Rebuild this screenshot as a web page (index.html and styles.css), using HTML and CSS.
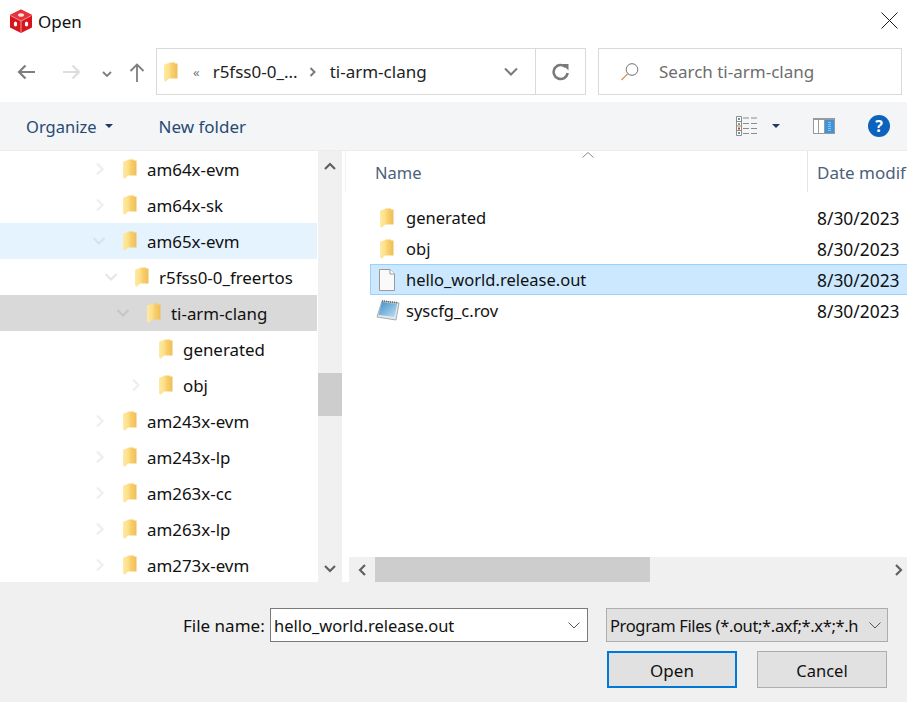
FILE: index.html
```html
<!DOCTYPE html>
<html lang="en">
<head>
<meta charset="utf-8">
<title>Open</title>
<link rel="stylesheet" href="styles.css">
</head>
<body>
<svg class="defs" width="0" height="0" aria-hidden="true">
  <defs>
    <linearGradient id="fg" x1="0" y1="0" x2="1" y2="0">
      <stop offset="0" stop-color="#fdeba6"/><stop offset="1" stop-color="#fcdc82"/>
    </linearGradient>
    <linearGradient id="fb" x1="0" y1="0" x2="1" y2="0">
      <stop offset="0" stop-color="#fbd877"/><stop offset="1" stop-color="#efbd58"/>
    </linearGradient>
    <linearGradient id="nb" x1="0" y1="0" x2="1" y2="1">
      <stop offset="0" stop-color="#3f8fc8"/><stop offset="1" stop-color="#bfe0f2"/>
    </linearGradient>
    <symbol id="folder" viewBox="0 0 16 22">
      <path d="M6.500 1.500H12V2.500H14.500V17.500H6.500Z" fill="url(#fb)"/>
      <path d="M1 3.800 7.300 1.400V16.600L2.600 20.700 1 19.500Z" fill="url(#fg)"/>
    </symbol>
  </defs>
</svg>
<div class="dialog">
  <header class="titlebar">
    <svg class="appicon" width="24" height="24" viewBox="0 0 24 24">
      <path d="M12 .5 23 6V18.500L12 24 1 18.500V6Z" fill="#d8141c"/>
      <path d="M12 .5 23 6 12 11.500 1 6Z" fill="#e8333a"/>
      <path d="M1.500 6.500 12 12V23.500M22.500 6.500 12 12" fill="none" stroke="#f7b8ba" stroke-width=".8"/>
      <ellipse cx="12" cy="6" rx="3" ry="1.800" fill="#fde5e5"/>
      <ellipse cx="6.500" cy="15" rx="1.700" ry="2.600" fill="#fff"/>
      <ellipse cx="17.500" cy="15" rx="1.700" ry="2.600" fill="#fff"/>
    </svg>
    <span class="title">Open</span>
    <svg class="close" width="17" height="17" viewBox="0 0 17 17"><path d="M.5.500 16.500 16.500M16.500.500.500 16.500" stroke="#1a1a1a" fill="none"/></svg>
  </header>

  <nav class="addressrow">
    <svg class="nav back" width="20" height="16" viewBox="0 0 20 16"><path d="M19 8H3M9.500 1.500 3 8l6.500 6.500" fill="none" stroke="#7e7e7e" stroke-width="2.200"/></svg>
    <svg class="nav fwd" width="20" height="16" viewBox="0 0 20 16"><path d="M1 8H17M10.500 1.500 17 8l-6.500 6.500" fill="none" stroke="#dedede" stroke-width="2.200"/></svg>
    <svg class="nav hist" width="10" height="6" viewBox="0 0 10 6"><path d="M1 1l4 4 4-4" fill="none" stroke="#7e7e7e" stroke-width="1.800"/></svg>
    <svg class="nav up" width="16" height="20" viewBox="0 0 16 20"><path d="M8 20V3M1.500 9 8 2.500 14.500 9" fill="none" stroke="#7e7e7e" stroke-width="1.800"/></svg>
    <div class="address">
      <svg class="crumbfolder" width="16" height="22"><use href="#folder"/></svg>
      <span class="chev2">&laquo;</span>
      <span class="crumb">r5fss0-0_...</span>
      <svg class="crumbarrow" width="8" height="10" viewBox="0 0 8 10"><path d="M1.500 1 5.500 5 1.500 9" fill="none" stroke="#7a7a7a" stroke-width="2"/></svg>
      <span class="crumb crumb-last">ti-arm-clang</span>
      <svg class="addrdrop" width="14" height="9" viewBox="0 0 14 9"><path d="M1 1.500 7 7.500 13 1.500" fill="none" stroke="#7a7a7a" stroke-width="2"/></svg>
      <div class="refresh">
        <svg width="18" height="18" viewBox="0 0 18 18"><path d="M13.800 4.200A7 7 0 1 0 15.600 10" fill="none" stroke="#7a7a7a" stroke-width="2.600"/><path d="M10 1h6.500v6.500z" fill="#7a7a7a"/></svg>
      </div>
    </div>
    <div class="search">
      <svg width="20" height="20" viewBox="0 0 20 20"><circle cx="12" cy="7.500" r="5.800" fill="none" stroke="#6e6e6e"/><path d="M7.800 11.700 1.500 18" stroke="#d59a5f" stroke-width="1.400"/></svg>
      <span>Search ti-arm-clang</span>
    </div>
  </nav>

  <div class="toolbar">
    <span class="tool organize">Organize</span>
    <span class="caret"></span>
    <span class="tool newfolder">New folder</span>
    <div class="toolicons">
      <svg class="viewicon" width="22" height="20" viewBox="0 0 22 20">
        <path d="M.5.500h5v19h-5zM.5 5.500h5M.5 10h5M.5 14.500h5" fill="#fff" stroke="#8c8c8c"/>
        <rect x="2" y="2" width="2" height="2" fill="#5b93b8"/><rect x="2" y="7" width="2" height="2" fill="#8aa24f"/><rect x="2" y="11.500" width="2" height="2" fill="#cf3a1c"/><rect x="2" y="16" width="2" height="2" fill="#5b93b8"/>
        <path d="M7 2h6m2 0h6M7 7.500h6m2 0h6M7 12.500h6m2 0h6M7 17.500h6m2 0h6" stroke="#8c8c8c" stroke-width="1.200"/>
      </svg>
      <span class="caret viewcaret"></span>
      <svg class="paneicon" width="22" height="16" viewBox="0 0 22 16">
        <rect width="22" height="16" fill="#9a9a9a"/>
        <rect x="1" y="2" width="4" height="13" fill="#fff"/><rect x="6" y="2" width="5" height="13" fill="#fff"/>
        <rect x="12" y="2" width="9" height="13" fill="#3f93dc"/>
        <path d="M16.500 4v9" stroke="#8cc3ee" stroke-width="3" stroke-dasharray="1 1"/>
      </svg>
      <span class="help">?</span>
    </div>
  </div>

  <main class="panes">
    <section class="treepane">
      <ul class="tree">
        <li class="row d1"><svg class="tw" width="10" height="14" viewBox="0 0 10 14"><path d="M2 1.500 7.500 7 2 12.500"/></svg><svg class="fi" width="16" height="22"><use href="#folder"/></svg><span>am64x-evm</span></li>
        <li class="row d1"><svg class="tw" width="10" height="14" viewBox="0 0 10 14"><path d="M2 1.500 7.500 7 2 12.500"/></svg><svg class="fi" width="16" height="22"><use href="#folder"/></svg><span>am64x-sk</span></li>
        <li class="row d1 hover"><svg class="tw open" width="14" height="10" viewBox="0 0 14 10"><path d="M1.500 2 7 7.500 12.500 2"/></svg><svg class="fi" width="16" height="22"><use href="#folder"/></svg><span>am65x-evm</span></li>
        <li class="row d2"><svg class="tw open" width="14" height="10" viewBox="0 0 14 10"><path d="M1.500 2 7 7.500 12.500 2"/></svg><svg class="fi" width="16" height="22"><use href="#folder"/></svg><span>r5fss0-0_freertos</span></li>
        <li class="row d3 selected"><svg class="tw open" width="14" height="10" viewBox="0 0 14 10"><path d="M1.500 2 7 7.500 12.500 2"/></svg><svg class="fi" width="16" height="22"><use href="#folder"/></svg><span>ti-arm-clang</span></li>
        <li class="row d4"><span class="tw-none"></span><svg class="fi" width="16" height="22"><use href="#folder"/></svg><span>generated</span></li>
        <li class="row d4"><svg class="tw" width="10" height="14" viewBox="0 0 10 14"><path d="M2 1.500 7.500 7 2 12.500"/></svg><svg class="fi" width="16" height="22"><use href="#folder"/></svg><span>obj</span></li>
        <li class="row d1"><svg class="tw" width="10" height="14" viewBox="0 0 10 14"><path d="M2 1.500 7.500 7 2 12.500"/></svg><svg class="fi" width="16" height="22"><use href="#folder"/></svg><span>am243x-evm</span></li>
        <li class="row d1"><svg class="tw" width="10" height="14" viewBox="0 0 10 14"><path d="M2 1.500 7.500 7 2 12.500"/></svg><svg class="fi" width="16" height="22"><use href="#folder"/></svg><span>am243x-lp</span></li>
        <li class="row d1"><svg class="tw" width="10" height="14" viewBox="0 0 10 14"><path d="M2 1.500 7.500 7 2 12.500"/></svg><svg class="fi" width="16" height="22"><use href="#folder"/></svg><span>am263x-cc</span></li>
        <li class="row d1"><svg class="tw" width="10" height="14" viewBox="0 0 10 14"><path d="M2 1.500 7.500 7 2 12.500"/></svg><svg class="fi" width="16" height="22"><use href="#folder"/></svg><span>am263x-lp</span></li>
        <li class="row d1"><svg class="tw" width="10" height="14" viewBox="0 0 10 14"><path d="M2 1.500 7.500 7 2 12.500"/></svg><svg class="fi" width="16" height="22"><use href="#folder"/></svg><span>am273x-evm</span></li>
      </ul>
      <div class="vscroll">
        <svg class="sa" width="12" height="8" viewBox="0 0 12 8"><path d="M1 7 6 2l5 5"/></svg>
        <div class="vtrack"><div class="vthumb"></div></div>
        <svg class="sa" width="12" height="8" viewBox="0 0 12 8"><path d="M1 1l5 5 5-5"/></svg>
      </div>
    </section>
    <section class="filepane">
      <div class="colhead">
        <div class="colname">Name<svg class="sortup" width="12" height="6" viewBox="0 0 12 6"><path d="M.5 5.500 6 .500l5.500 5" fill="none" stroke="#8a8a8a"/></svg></div>
        <div class="coldate">Date modif</div>
      </div>
      <ul class="files">
        <li class="file"><svg class="ficon" width="16" height="22"><use href="#folder"/></svg><span class="fname">generated</span><span class="fdate">8/30/2023</span></li>
        <li class="file"><svg class="ficon" width="16" height="22"><use href="#folder"/></svg><span class="fname">obj</span><span class="fdate">8/30/2023</span></li>
        <li class="file picked"><svg class="ficon" width="16" height="22" viewBox="0 0 16 22"><path d="M.5.500H11L15.500 5V21.500H.5Z" fill="#fafafa" stroke="#9a9a9a"/><path d="M11 .500V5H15.500" fill="#fff" stroke="#9a9a9a"/></svg><span class="fname">hello_world.release.out</span><span class="fdate">8/30/2023</span></li>
        <li class="file"><svg class="ficon wide" width="24" height="22" viewBox="0 0 24 22"><path d="M6 1 23 3 20 20 1 17Z" fill="#e4e8ea" stroke="#a6acb0"/><path d="M6 2 21 4 18.500 17 2.500 15Z" fill="url(#nb)"/><path d="M6 1 22 3" stroke="#6b7378" stroke-width="2" stroke-dasharray="1 1"/></svg><span class="fname">syscfg_c.rov</span><span class="fdate">8/30/2023</span></li>
      </ul>
      <div class="hscroll">
        <svg class="sa" width="8" height="12" viewBox="0 0 8 12"><path d="M7 1 2 6l5 5"/></svg>
        <div class="htrack"><div class="hthumb"></div></div>
        <svg class="sa" width="8" height="12" viewBox="0 0 8 12"><path d="M1 1l5 5-5 5"/></svg>
      </div>
    </section>
  </main>

  <footer class="bottom">
    <div class="line1">
      <label class="fnlabel">File name:</label>
      <div class="fninput"><span>hello_world.release.out</span><svg width="12" height="7" viewBox="0 0 12 7"><path d="M.5.500 6 6 11.500.500" fill="none" stroke="#555"/></svg></div>
      <div class="filter"><span class="ftext">Program Files (*.out;*.axf;*.x*;*.h</span><svg width="12" height="7" viewBox="0 0 12 7"><path d="M.5.500 6 6 11.500.500" fill="none" stroke="#555"/></svg></div>
    </div>
    <div class="line2">
      <button class="btn primary">Open</button>
      <button class="btn cancel">Cancel</button>
    </div>
  </footer>
</div>
</body>
</html>
```
FILE: styles.css
```css
* { box-sizing: border-box; }
html, body { margin: 0; padding: 0; }
body {
  width: 907px;
  height: 702px;
  overflow: hidden;
  background: #fff;
  font-family: "Noto Sans", "Open Sans", sans-serif;
  font-size: 16.5px;
  color: #111;
}
.defs { position: absolute; }
ul { list-style: none; margin: 0; padding: 0; }
svg { display: block; flex: none; }

.dialog { display: flex; flex-direction: column; height: 702px; }

.titlebar { height: 48px; display: flex; align-items: center; padding: 0 9px 7px 9px; }
.title { margin: 2px 0 0 5px; color: #111; font-size: 17px; }
.close { margin-left: auto; }

.addressrow { height: 54px; display: flex; align-items: flex-start; padding-right: 5px; font-size: 17px; }
.nav { margin-top: 16px; }
.back { margin-left: 16px; }
.fwd { margin-left: 26px; }
.hist { margin-left: 20px; margin-top: 23px; }
.up { margin-left: 17px; margin-top: 14px; }
.address {
  margin-left: 11px; width: 430px; height: 47px;
  border: 1px solid #d9d9d9; display: flex; align-items: center; padding-left: 6px;
}
.chev2 { margin-left: 14px; color: #777; font-size: 13px; }
.crumb { margin-left: 13px; color: #222; }
.crumbarrow { margin-left: 11px; }
.crumb-last { margin-left: 13px; }
.addrdrop { margin-left: auto; margin-right: 17px; }
.refresh { width: 50px; height: 45px; border-left: 1px solid #d9d9d9; display: flex; align-items: center; justify-content: center; }
.search {
  margin-left: 12px; width: 304px; height: 47px;
  border: 1px solid #d9d9d9; display: flex; align-items: center; padding-left: 21px; color: #6d6d6d;
}
.search span { margin-left: 19px; }

.toolbar {
  height: 49px; background: #f4f5f7; border-bottom: 1px solid #ececec;
  display: flex; align-items: center; padding-left: 26px; color: #274a73;
}
.caret { width: 0; height: 0; border: 4px solid transparent; border-top: 4px solid #1f3a5f; border-bottom: 0; margin-left: 9px; }
.newfolder { margin-left: 45px; font-size: 17px; }
.toolicons { margin-left: auto; display: flex; align-items: center; padding-right: 17px; }
.viewcaret { margin-left: 14px; }
.paneicon { margin-left: 33px; }
.help {
  margin-left: 33px; width: 22px; height: 22px; border-radius: 50%; background: #0b63bd; color: #fff;
  font-weight: 700; font-size: 16px; line-height: 22px; text-align: center;
}

.panes { flex: 1; display: flex; min-height: 0; }
.treepane { width: 342px; display: flex; }
.tree { width: 317px; margin-right: 1px; font-size: 16.9px; }
.row { height: 36px; display: flex; align-items: center; white-space: nowrap; color: #111; }
.row .fi { margin-right: 9px; }
.tw, .sa { fill: none; stroke: #eeeeee; stroke-width: 2.200; }
.tw { margin-right: 17px; margin-left: 2px; }
.tw.open { margin-left: -1px; margin-right: 16px; stroke: #e6e6e6; }
.tw-none { width: 29px; }
.d1 { padding-left: 93px; }
.d2 { padding-left: 105px; }
.d3 { padding-left: 117px; }
.d4 { padding-left: 129px; }
.hover { background: #e5f3ff; }
.selected { background: #d9d9d9; }
.row.selected .tw { stroke: #c6c6c6; }
.row.hover .tw { stroke: #d5e3ee; }

.vscroll, .hscroll { background: #f0f0f0; display: flex; align-items: center; justify-content: space-between; }
.sa { stroke: #606060; }
.vscroll { width: 24px; flex-direction: column; padding: 11px 0 9px; }
.vtrack { flex: 1; width: 100%; padding-top: 203px; }
.vthumb { height: 43px; background: #cdcdcd; }

.filepane { flex: 1; display: flex; flex-direction: column; padding-left: 7px; min-width: 0; position: relative; overflow: hidden; }
.colhead { height: 41px; display: flex; margin-left: -4px; color: #4c607a; border-left: 1px solid #f2f2f2; }
.colname { width: 462px; padding: 10px 0 0 29px; border-right: 1px solid #e5e5e5; position: relative; }
.sortup { position: absolute; top: 1px; left: 236px; }
.coldate { padding: 10px 0 0 9px; white-space: nowrap; font-size: 17px; }
.files { flex: 1; padding: 10px 0 0 21px; }
.file { height: 31px; display: flex; align-items: center; white-space: nowrap; padding-left: 9px; color: #111; margin-right: -30px; }
.ficon { margin-right: 11px; }
.ficon.wide { margin-left: -3px; margin-right: 6px; }
.fname { width: 411px; }
.fdate { font-size: 17.4px; }
.picked { background: #cce8ff; border: 1px solid #99d1ff; padding-left: 8px; }
.hscroll { height: 25px; padding: 0 4px 0 9px; }
.htrack { flex: 1; padding-left: 9px; height: 100%; }
.hthumb { width: 275px; height: 100%; background: #cdcdcd; }

.bottom { height: 120px; background: #f0f0f0; padding: 26px 19px 0 0; }
.line1 { display: flex; align-items: center; height: 34px; }
.fnlabel { margin-left: 183px; width: 79px; white-space: nowrap; font-size: 17px; }
.fninput {
  margin-left: 8px; width: 318px; height: 34px; background: #fff; border: 1px solid #7a7a7a;
  display: flex; align-items: center; justify-content: space-between; padding: 1px 7px 0 3px;
}
.filter {
  margin-left: 18px; width: 282px; height: 34px; background: #e1e1e1; border: 1px solid #adadad;
  display: flex; align-items: center; justify-content: space-between; padding: 0 6px 0 3px;
}
.ftext { width: 249px; white-space: nowrap; letter-spacing: -.36px; }
.line2 { display: flex; justify-content: flex-end; gap: 20px; margin-top: 9px; padding-right: 1px; }
.btn {
  width: 130px; height: 37px; background: #e1e1e1; border: 1px solid #adadad; padding: 1px 0 0;
  font: inherit; color: #111;
}
.primary { border: 2px solid #0078d7; font-size: 17px; }
```
